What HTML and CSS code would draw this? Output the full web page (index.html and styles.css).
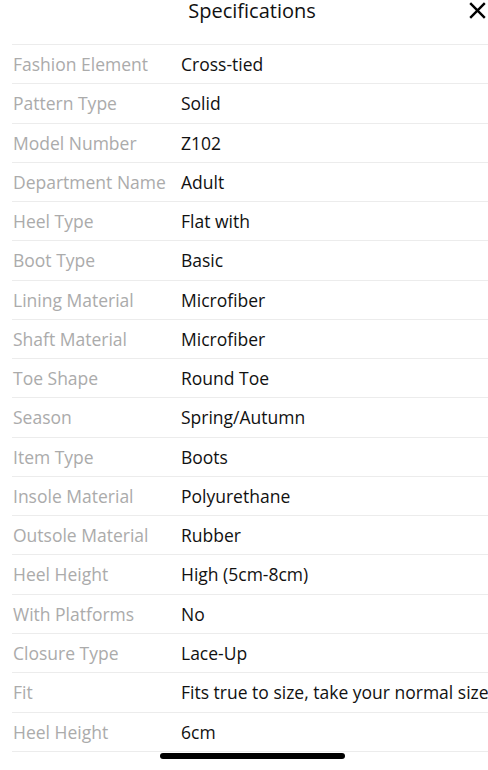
FILE: index.html
```html
<!DOCTYPE html>
<html>
<head>
<meta charset="utf-8">
<link rel="stylesheet" href="styles.css">
</head>
<body>
<div class="sheet">
  <header class="head">
    <h1 class="title">Specifications</h1>
    <button class="close" aria-label="Close">
      <svg width="17" height="17" viewBox="0 0 17 17"><path d="M1.2 1.2 L15.8 15.8 M15.8 1.2 L1.2 15.8" stroke="#000" stroke-width="2.4" stroke-linecap="butt" fill="none"/></svg>
    </button>
  </header>
  <div class="list">
    <div class="row"><span class="k">Fashion Element</span><span class="v">Cross-tied</span></div>
    <div class="row"><span class="k">Pattern Type</span><span class="v">Solid</span></div>
    <div class="row"><span class="k">Model Number</span><span class="v">Z102</span></div>
    <div class="row"><span class="k">Department Name</span><span class="v">Adult</span></div>
    <div class="row"><span class="k">Heel Type</span><span class="v">Flat with</span></div>
    <div class="row"><span class="k">Boot Type</span><span class="v">Basic</span></div>
    <div class="row"><span class="k">Lining Material</span><span class="v">Microfiber</span></div>
    <div class="row"><span class="k">Shaft Material</span><span class="v">Microfiber</span></div>
    <div class="row"><span class="k">Toe Shape</span><span class="v">Round Toe</span></div>
    <div class="row"><span class="k">Season</span><span class="v">Spring/Autumn</span></div>
    <div class="row"><span class="k">Item Type</span><span class="v">Boots</span></div>
    <div class="row"><span class="k">Insole Material</span><span class="v">Polyurethane</span></div>
    <div class="row"><span class="k">Outsole Material</span><span class="v">Rubber</span></div>
    <div class="row"><span class="k">Heel Height</span><span class="v">High (5cm-8cm)</span></div>
    <div class="row"><span class="k">With Platforms</span><span class="v">No</span></div>
    <div class="row"><span class="k">Closure Type</span><span class="v">Lace-Up</span></div>
    <div class="row"><span class="k">Fit</span><span class="v">Fits true to size, take your normal size</span></div>
    <div class="row"><span class="k">Heel Height</span><span class="v">6cm</span></div>
  </div>
  <div class="home-indicator"></div>
</div>
</body>
</html>
```
FILE: styles.css
```css
* { box-sizing: border-box; }
html, body {
  margin: 0;
  padding: 0;
  background: #fff;
}
body {
  font-family: "Open Sans", "Noto Sans", sans-serif;
  color: #111;
  overflow: hidden;
  width: 488px;
  height: 770px;
}
.sheet {
  position: relative;
  width: 488px;
  height: 770px;
}
.head {
  position: relative;
  height: 45px;
}
.title {
  margin: 0;
  text-align: center;
  font-size: 20px;
  font-weight: 400;
  line-height: 24px;
  margin-top: -1px;
  padding-left: 16px;
  color: #111;
}
.close {
  position: absolute;
  top: 3px;
  right: 2px;
  width: 17px;
  height: 17px;
  padding: 0;
  border: 0;
  background: none;
  display: block;
}
.close svg { display: block; }
.list {
  margin-left: 12px;
  border-bottom: 1px solid #ececec;
}
.row {
  display: flex;
  height: 39.28px;
  border-top: 1px solid #ececec;
  padding-top: 1px;
  font-size: 17.5px;
  line-height: 37.28px;
  white-space: nowrap;
}
.k {
  width: 169px;
  flex: none;
  padding-left: 1px;
  color: #ababab;
}
.v {
  color: #111;
}
.home-indicator {
  position: absolute;
  left: 160px;
  top: 754px;
  width: 185px;
  height: 5.5px;
  border-radius: 3px;
  background: #000;
}
```
